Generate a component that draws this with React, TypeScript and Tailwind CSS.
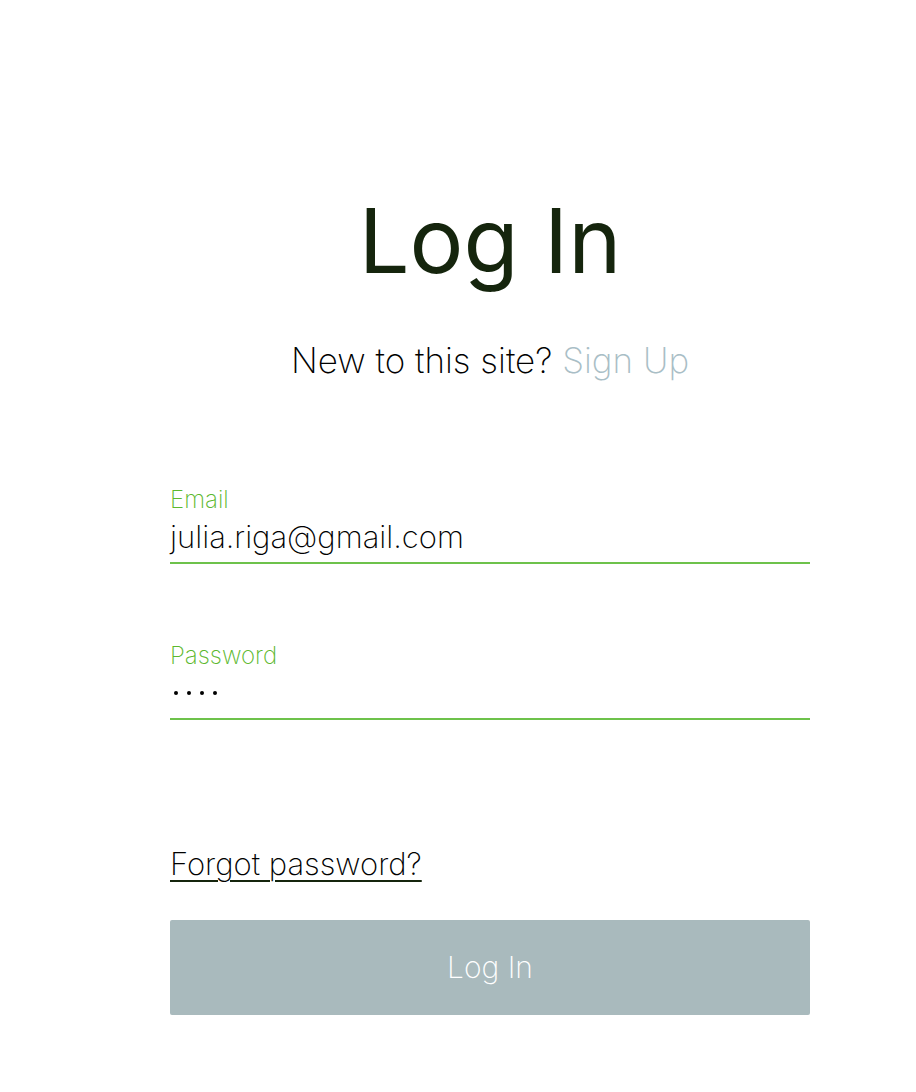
import React from "react";

export default function App() {
  const font = { fontFamily: "Inter, 'Open Sans', sans-serif" };
  return (
    <div className="min-h-screen bg-white" style={font}>
      <div className="ml-[170px] w-[640px] pt-[186px]">
        <h1 className="text-center text-[90px] font-normal leading-[110px] text-[#15250d]">Log In</h1>
        <p className="mt-[42px] text-center text-[35px] font-extralight leading-[44px] text-black">
          New to this site? <span className="text-[#a9bec6]">Sign Up</span>
        </p>
        <div className="mt-[104px]">
          <label className="block text-[24px] font-extralight leading-[28px] text-[#5cb82e]">Email</label>
          <div className="mt-[3px] border-b-2 border-[#6dc24b] pb-[5px] text-[31px] font-extralight leading-[40px] text-black">
            julia.riga@gmail.com
          </div>
        </div>
        <div className="mt-[78px]">
          <label className="block text-[24px] font-extralight leading-[28px] text-[#5cb82e]">Password</label>
          <div className="flex h-[50px] items-center gap-[9px] border-b-2 border-[#6dc24b] pb-[2px] pl-[4px]">
            <span className="h-[4px] w-[4px] rounded-full bg-black" />
            <span className="h-[4px] w-[4px] rounded-full bg-black" />
            <span className="h-[4px] w-[4px] rounded-full bg-black" />
            <span className="h-[4px] w-[4px] rounded-full bg-black" />
          </div>
        </div>
        <div className="mt-[126px] h-[36px]">
          <a href="#" className="text-[31px] font-extralight leading-[36px] text-black underline decoration-[#15250d] decoration-[1.5px] underline-offset-[5px]">
            Forgot password?
          </a>
        </div>
        <button className="mt-[38px] flex h-[95px] w-full items-center justify-center rounded-[2px] bg-[#a9babd] text-[30px] font-extralight text-white">
          Log In
        </button>
      </div>
    </div>
  );
}
